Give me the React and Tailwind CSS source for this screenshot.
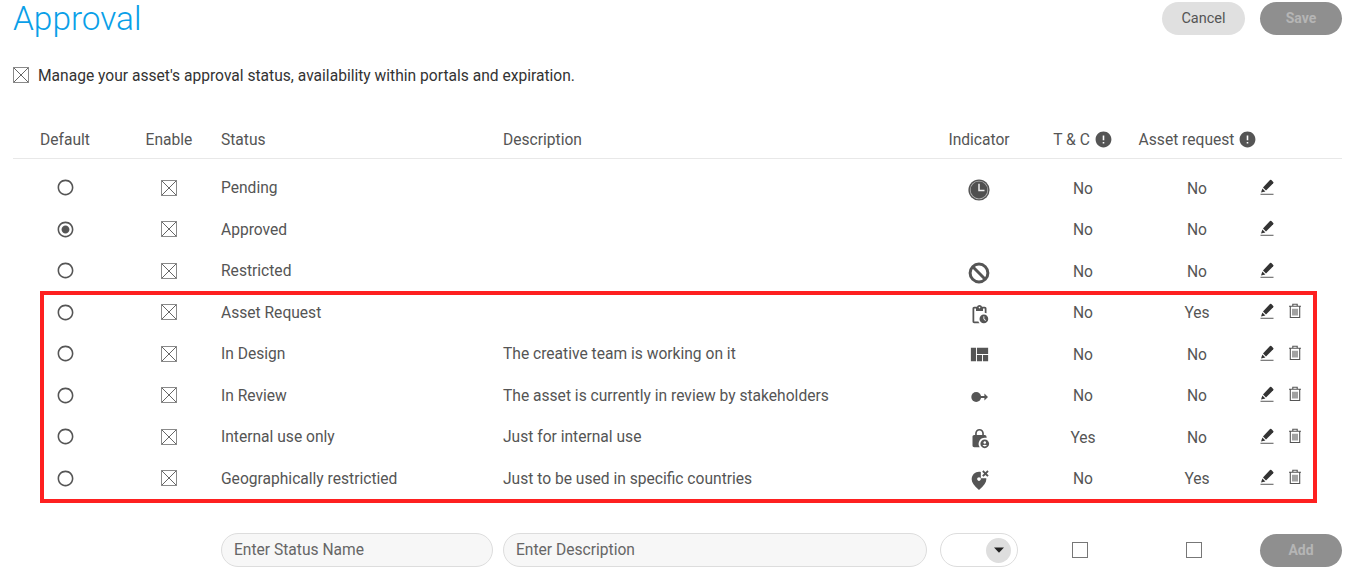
import {
  MdError,
  MdLockPerson,
  MdOutlinePendingActions,
  MdRadioButtonChecked,
  MdRadioButtonUnchecked,
  MdViewQuilt,
  MdWrongLocation,
} from "react-icons/md";

const gridCols =
  "grid grid-cols-[104px_104px_282px_437px_78px_130px_98px_96px] items-center";

const rows = [
  { status: "Pending", tc: "No", request: "No", icon: "pending" },
  { status: "Approved", tc: "No", request: "No", selected: true },
  { status: "Restricted", tc: "No", request: "No", icon: "restricted" },
];

const customRows = [
  { status: "Asset Request", tc: "No", request: "Yes", icon: "request" },
  {
    status: "In Design",
    description: "The creative team is working on it",
    tc: "No",
    request: "No",
    icon: "design",
  },
  {
    status: "In Review",
    description: "The asset is currently in review by stakeholders",
    tc: "No",
    request: "No",
    icon: "review",
  },
  {
    status: "Internal use only",
    description: "Just for internal use",
    tc: "Yes",
    request: "No",
    icon: "internal",
  },
  {
    status: "Geographically restrictied",
    description: "Just to be used in specific countries",
    tc: "No",
    request: "Yes",
    icon: "geo",
  },
];

function CrossBox({ className }) {
  return (
    <svg viewBox="0 0 16 16" className={className} fill="none" stroke="currentColor">
      <rect x="0.5" y="0.5" width="15" height="15" stroke="#8a8a8a" />
      <path d="M1 1l14 14M15 1L1 15" strokeWidth="0.9" />
    </svg>
  );
}

function PencilIcon() {
  return (
    <svg viewBox="0 0 14 16" className="h-[16px] w-[14px] -translate-y-[1px]">
      <path d="M3 8.6L10 1.1a1 1 0 0 1 1.4 0l1.8 1.8a1 1 0 0 1 0 1.4L6 11.6z" fill="#333" />
      <path d="M2.4 9.4l3 3L1 13.6z" fill="#333" />
      <path d="M0.5 15.3h13" stroke="#666" strokeWidth="1.1" fill="none" />
    </svg>
  );
}

function TrashIcon() {
  return (
    <svg viewBox="0 0 14 16" className="h-[16px] w-[14px] -translate-x-[1px] -translate-y-[1px]" fill="none" stroke="#555" strokeWidth="1.1">
      <path d="M1 3.2h12M4.8 3V1.2h4.4V3M2.3 3.4v11.1h9.4V3.4M5 5.8v6.6M7 5.8v6.6M9 5.8v6.6" />
    </svg>
  );
}

function ClockIcon() {
  return (
    <svg viewBox="0 0 22 22" className="h-[22px] w-[22px] translate-y-[2px]">
      <circle cx="11" cy="11" r="10.6" fill="#555" />
      <circle cx="11" cy="11" r="9.2" fill="#b5b5b5" />
      <circle cx="11" cy="11" r="8.4" fill="#505050" />
      <path d="M11 4.8V11.6H16.5" fill="none" stroke="#eeeeee" strokeWidth="1.5" />
    </svg>
  );
}

function BlockIcon() {
  return (
    <svg viewBox="0 0 22 22" className="h-[22px] w-[22px] translate-y-[2px]" fill="none" stroke="#555" strokeWidth="3">
      <circle cx="11" cy="11" r="8.9" />
      <path d="M4.8 4.8L17.2 17.2" />
    </svg>
  );
}

function ReviewIcon() {
  return (
    <svg viewBox="0 0 18 12" className="h-[12px] w-[18px] translate-x-[1px]" fill="#555">
      <circle cx="5.2" cy="6" r="4.9" />
      <path d="M9 5.1h4.4V2.6L17 6l-3.6 3.4V6.9H9z" />
    </svg>
  );
}

function Indicator({ type }) {
  if (type === "pending") return <ClockIcon />;
  if (type === "restricted") return <BlockIcon />;
  if (type === "request") return <MdOutlinePendingActions className="h-[21px] w-[21px] translate-y-[2px] text-[#555]" />;
  if (type === "design") return <MdViewQuilt className="h-[23px] w-[23px] translate-y-[1px] text-[#555]" />;
  if (type === "review") return <span className="translate-y-[2px]"><ReviewIcon /></span>;
  if (type === "internal") return <MdLockPerson className="h-[21px] w-[21px] translate-y-[2px] text-[#555]" />;
  if (type === "geo") return <MdWrongLocation className="h-[22px] w-[22px] translate-y-[2px] text-[#555]" />;
  return null;
}

function StatusRow({ row, deletable }) {
  return (
    <div className={`${gridCols} h-[41.5px] text-[#555]`}>
      <div className="flex justify-center">
        {row.selected ? (
          <MdRadioButtonChecked className="h-[19px] w-[19px]" />
        ) : (
          <MdRadioButtonUnchecked className="h-[19px] w-[19px]" />
        )}
      </div>
      <div className="flex justify-center">
        <CrossBox className="h-[16px] w-[16px] text-[#555]" />
      </div>
      <div className="pt-[2px]">{row.status}</div>
      <div className="pt-[2px]">{row.description}</div>
      <div className="flex justify-center">
        <Indicator type={row.icon} />
      </div>
      <div className="pt-[3px] text-center">{row.tc}</div>
      <div className="pt-[3px] text-center">{row.request}</div>
      <div className="flex items-center gap-[15px] pl-[14px]">
        <PencilIcon />
        {deletable && <TrashIcon />}
      </div>
    </div>
  );
}

export default function App() {
  return (
    <div className="h-[575px] overflow-hidden bg-white pl-[13px] pr-[14px] font-['Roboto',sans-serif] text-[15.6px]">
      <div className="flex h-[36px] items-start justify-between">
        <h1 className="text-[33.4px] font-light leading-[38px] text-[#0a9fe8]">Approval</h1>
        <div className="mt-[2px] flex gap-[15px]">
          <button className="h-[33px] w-[83px] rounded-full bg-[#e0e0e0] text-[14.5px] text-[#555]">Cancel</button>
          <button className="h-[33px] w-[82px] rounded-full bg-[#8f8f8f] text-[14px] font-bold text-[#b5b5b5]">Save</button>
        </div>
      </div>

      <div className="mt-[29px] flex h-[22px] items-center gap-[9px] text-[#333]">
        <CrossBox className="h-[16px] w-[16px] -translate-y-[1px] text-[#555]" />
        <p className="pt-[2px]">Manage your asset's approval status, availability within portals and expiration.</p>
      </div>

      <div className={`${gridCols} mt-[35px] h-[37px] border-b border-[#e8e8e8] pt-[2px] text-[#555]`}>
        <div className="text-center">Default</div>
        <div className="text-center">Enable</div>
        <div>Status</div>
        <div>Description</div>
        <div className="text-center">Indicator</div>
        <div className="flex items-center justify-center gap-[4px] whitespace-nowrap">
          T &amp; C <MdError className="h-[19px] w-[19px] shrink-0 -translate-y-[1px]" />
        </div>
        <div className="flex items-center justify-center gap-[4px] whitespace-nowrap pl-[2px]">
          Asset request <MdError className="h-[19px] w-[19px] shrink-0 -translate-y-[1px]" />
        </div>
        <div />
      </div>

      <div className="mt-[8px]">
        {rows.map((row) => (
          <StatusRow key={row.status} row={row} />
        ))}
      </div>

      <div className="relative">
        {customRows.map((row) => (
          <StatusRow key={row.status} row={row} deletable />
        ))}
        <div className="absolute -top-[1px] left-[27px] h-[212px] w-[1277px] border-4 border-[#fe2020]" />
      </div>

      <div className={`${gridCols} mt-[34px] h-[34px] text-[#555]`}>
        <div />
        <div />
        <div className="pr-[10px]">
          <input
            placeholder="Enter Status Name"
            className="h-[34px] w-full rounded-full border border-[#ddd] bg-[#f7f7f7] px-[12px] placeholder:text-[#666]"
          />
        </div>
        <div className="pr-[13px]">
          <input
            placeholder="Enter Description"
            className="h-[34px] w-full rounded-full border border-[#ddd] bg-[#f7f7f7] px-[12px] placeholder:text-[#666]"
          />
        </div>
        <div className="flex h-[34px] items-center justify-end rounded-full border border-[#ddd] pr-[6px]">
          <span className="flex h-[25px] w-[25px] items-center justify-center rounded-full bg-[#dedede]">
            <svg viewBox="0 0 10 6" className="h-[6px] w-[10px]" fill="#222">
              <path d="M0 0.5h10L5 5.8z" />
            </svg>
          </span>
        </div>
        <div className="flex justify-center pr-[6px]">
          <span className="h-[16px] w-[16px] border border-[#777]" />
        </div>
        <div className="flex justify-center pr-[6px]">
          <span className="h-[16px] w-[16px] border border-[#777]" />
        </div>
        <div className="flex justify-end">
          <button className="h-[33px] w-[82px] rounded-full bg-[#8f8f8f] text-[14px] font-bold text-[#b5b5b5]">Add</button>
        </div>
      </div>
    </div>
  );
}
